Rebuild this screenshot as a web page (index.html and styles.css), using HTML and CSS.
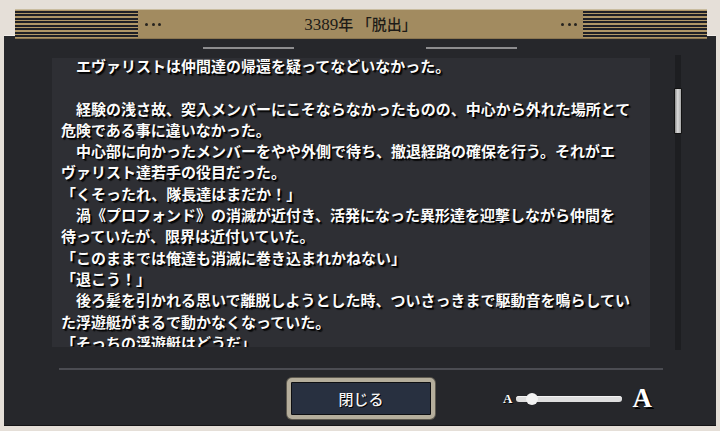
FILE: index.html
```html
<!DOCTYPE html>
<html lang="ja">
<head>
<meta charset="utf-8">
<title>3389年 「脱出」</title>
<link rel="stylesheet" href="styles.css">
</head>
<body>
<div class="screen">
  <header class="titlebar">
    <div class="stripes"></div>
    <div class="dots"><i></i><i></i><i></i></div>
    <h1 class="title"><span class="num">3389</span>年 「脱出」</h1>
    <div class="dots"><i></i><i></i><i></i></div>
    <div class="stripes"></div>
  </header>
  <main class="panel">
    <div class="tabs"><span class="tab"></span><span class="tab"></span></div>
    <div class="reader">
      <div class="page">
        <div class="story">
          <p>　エヴァリストは仲間達の帰還を疑ってなどいなかった。</p>
          <p>&nbsp;</p>
          <p>　経験の浅さ故、突入メンバーにこそならなかったものの、中心から外れた場所とて危険である事に違いなかった。</p>
          <p>　中心部に向かったメンバーをやや外側で待ち、撤退経路の確保を行う。それがエヴァリスト達若手の役目だった。</p>
          <p>「くそったれ、隊長達はまだか！」</p>
          <p>　渦《プロフォンド》の消滅が近付き、活発になった異形達を迎撃しながら仲間を待っていたが、限界は近付いていた。</p>
          <p>「このままでは俺達も消滅に巻き込まれかねない」</p>
          <p>「退こう！」</p>
          <p>　後ろ髪を引かれる思いで離脱しようとした時、ついさっきまで駆動音を鳴らしていた浮遊艇がまるで動かなくなっていた。</p>
          <p>「そっちの浮遊艇はどうだ」</p>
        </div>
      </div>
      <div class="scroll"><div class="thumb"></div></div>
    </div>
    <hr class="divider">
    <div class="footer">
      <button class="close">閉じる</button>
      <div class="size">
        <span class="a-small">A</span>
        <div class="track"><span class="knob"></span></div>
        <span class="a-big">A</span>
      </div>
    </div>
  </main>
</div>
</body>
</html>
```
FILE: styles.css
```css
html, body {
  margin: 0;
  padding: 0;
}
body {
  background: #e5dfd8;
  width: 720px;
  height: 431px;
  overflow: hidden;
  font-family: "Noto Sans CJK JP", sans-serif;
}
.screen {
  width: 720px;
  height: 431px;
}
.titlebar {
  position: relative;
  z-index: 1;
  display: flex;
  align-items: center;
  height: 30px;
  margin: 9px 13px 0 15px;
  background: #a28b60;
  box-shadow: inset 0 1px 0 #c9bc9f, inset 0 -1px 0 #8a7550;
}
.stripes {
  align-self: flex-start;
  margin-top: 1px;
  width: 123px;
  height: 28px;
  background: repeating-linear-gradient(to bottom, #b09767 0 1px, #1f2026 1px 2.6px, #b09767 2.6px 3.5px);
}
.stripes:last-child {
  width: 124px;
}
.dots {
  display: flex;
  gap: 3.5px;
  margin: 0 6px 0 7px;
}
.dots i {
  display: block;
  width: 3px;
  height: 3px;
  border-radius: 50%;
  background: #26231e;
}
.title {
  flex: 1;
  margin: 0;
  text-align: center;
  font-size: 15px;
  font-weight: 500;
  color: #1d1b17;
  letter-spacing: 0;
}
.title .num {
  font-family: "Liberation Serif", serif;
  font-size: 17px;
}
.panel {
  margin: -4px 4px 0 4px;
  height: 389px;
  background: #26272b;
  border-top: 1px solid #f1ede8;
  border-bottom: 1px solid #141416;
  display: flex;
  flex-direction: column;
}
.tabs {
  display: flex;
  justify-content: center;
  gap: 132px;
  margin-top: 11px;
}
.tab {
  display: block;
  width: 91px;
  height: 2px;
  background: #8d8d8f;
}
.reader {
  display: flex;
  margin-top: 6px;
  height: 295px;
}
.page {
  margin: 0 0 0 48px;
  width: 598px;
  height: 292px;
  box-sizing: border-box;
  padding-left: 9px;
  background: linear-gradient(to bottom, transparent 0 3px, #2e2f34 3px);
  overflow: hidden;
}
.story {
  width: 576px;
  font-size: 15px;
  line-height: 21.3px;
  font-weight: 700;
  color: #fbfbfb;
  line-break: strict;
  text-shadow: 1px 1px 0 #000, 2px 2px 1px rgba(0, 0, 0, 0.8);
}
.story p {
  margin: 0;
}
.scroll {
  margin-left: 25px;
  width: 6px;
  height: 295px;
  background: #1d1e21;
}
.thumb {
  margin: 33px 0 0 -1px;
  width: 8px;
  height: 46px;
  box-sizing: border-box;
  border: 1px solid #121212;
  border-radius: 1px;
  background: linear-gradient(to right, #8e8e8e, #dadada 45%, #a9a9a9);
}
.divider {
  margin: 18px 0 0 55px;
  width: 604px;
  height: 2px;
  border: 0;
  background: #4b4c52;
}
.footer {
  display: flex;
  align-items: center;
  margin-top: 8px;
}
.close {
  margin-left: 283px;
  width: 148px;
  height: 41px;
  box-sizing: border-box;
  border: 4px solid #b5ae9c;
  border-radius: 5px;
  background: #283040;
  box-shadow: inset 0 0 0 1px #0e0f12, 0 0 0 1px #5e5a50;
  font-family: "Noto Sans CJK JP", sans-serif;
  font-size: 15px;
  font-weight: 500;
  color: #f4f4f4;
  text-shadow: 1px 1px 0 #000;
  padding: 0;
}
.size {
  display: flex;
  align-items: center;
  margin-left: 68px;
}
.a-small {
  font-family: "Liberation Serif", serif;
  font-weight: 700;
  font-size: 13px;
  color: #fff;
  text-shadow: 1px 1px 0 #000;
  margin-right: 4px;
}
.track {
  position: relative;
  width: 106px;
  height: 6px;
  border-radius: 3px;
  background: #dedede;
  box-shadow: inset 0 1px 0 #f4f4f4;
}
.knob {
  position: absolute;
  left: 10px;
  top: -3px;
  width: 12px;
  height: 12px;
  border-radius: 50%;
  background: #f2f2f2;
}
.a-big {
  font-family: "Liberation Serif", serif;
  font-weight: 700;
  font-size: 27px;
  line-height: 1;
  color: #fff;
  text-shadow: 2px 2px 0 #000;
  margin-left: 10px;
}
```
